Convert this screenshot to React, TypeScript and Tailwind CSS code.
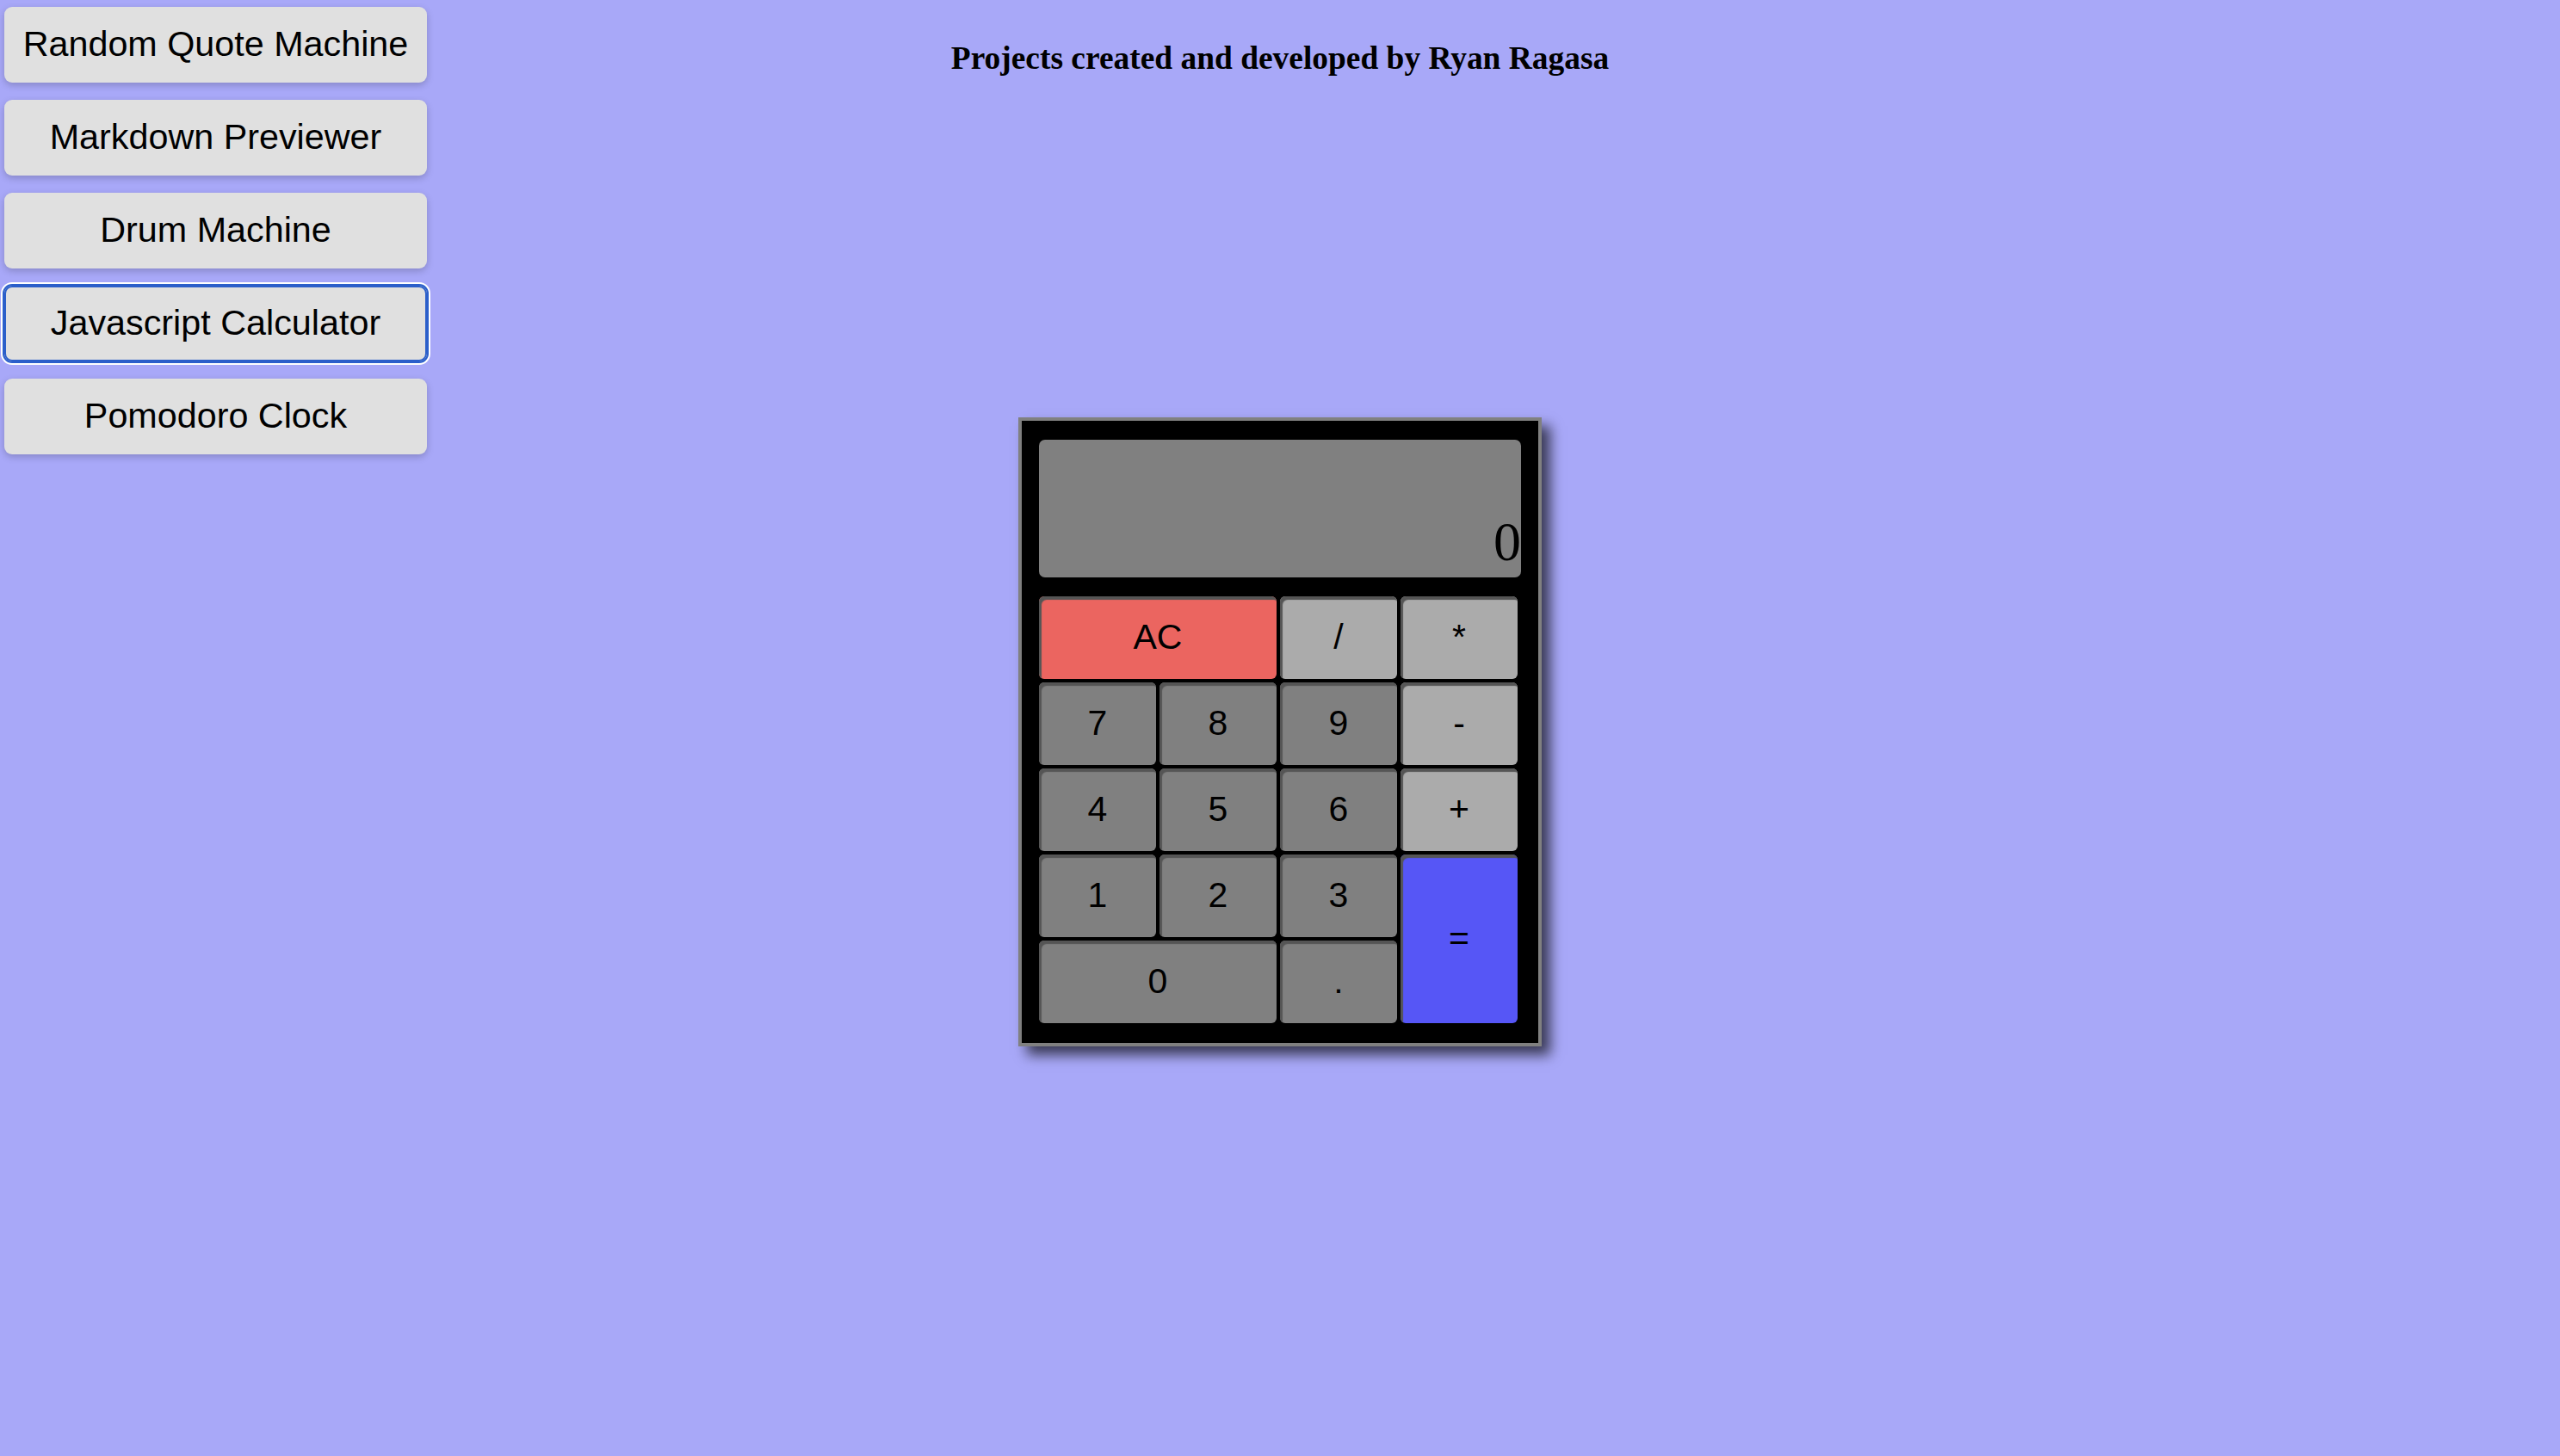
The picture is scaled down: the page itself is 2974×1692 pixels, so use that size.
import { FC } from 'react';

const projects = [
  'Random Quote Machine',
  'Markdown Previewer',
  'Drum Machine',
  'Javascript Calculator',
  'Pomodoro Clock',
];

// keypad layout, grid positions written out so tailwind picks them up
const keys = [
  { label: 'AC', cls: 'col-span-2 bg-[#eb6560]' },
  { label: '/', cls: 'bg-[#ababab]' },
  { label: '*', cls: 'bg-[#ababab]' },
  { label: '7', cls: 'bg-[#808080]' },
  { label: '8', cls: 'bg-[#808080]' },
  { label: '9', cls: 'bg-[#808080]' },
  { label: '-', cls: 'bg-[#ababab]' },
  { label: '4', cls: 'bg-[#808080]' },
  { label: '5', cls: 'bg-[#808080]' },
  { label: '6', cls: 'bg-[#808080]' },
  { label: '+', cls: 'bg-[#ababab]' },
  { label: '1', cls: 'bg-[#808080]' },
  { label: '2', cls: 'bg-[#808080]' },
  { label: '3', cls: 'bg-[#808080]' },
  { label: '=', cls: 'row-span-2 bg-[#5656f6]' },
  { label: '0', cls: 'col-span-2 bg-[#808080]' },
  { label: '.', cls: 'bg-[#808080]' },
];

const Calculator: FC = () => (
  <div className="w-[608px] border-4 border-[#808080] bg-black pt-[22px] pb-[23px] px-[20px] shadow-[10px_10px_14px_rgba(0,0,0,0.65)]">
    {/* display */}
    <div className="h-[160px] rounded-[7px] bg-[#808080] flex items-end justify-end pb-[9px]">
      <span className="text-[64px] leading-[64px] text-black font-['Liberation_Serif',serif]">0</span>
    </div>

    {/* keypad */}
    <div className="mt-[22px] w-[556px] grid grid-cols-4 auto-rows-[96px] gap-[4px]">
      {keys.map((k) => (
        <button
          key={k.label}
          className={`${k.cls} rounded-[6px] shadow-[inset_3px_4px_1px_#555] flex items-center justify-center text-[41px] text-black font-['Liberation_Sans',Arial,sans-serif]`}
        >
          {k.label}
        </button>
      ))}
    </div>
  </div>
);

export default function App() {
  return (
    <div className="min-h-screen bg-[#a8a8f8] grid grid-cols-[1fr_auto_1fr] grid-rows-[auto_1fr]">
      {/* project nav */}
      <div className="row-span-2 flex flex-col gap-[20.5px] pt-[8px] pl-[5px]">
        {projects.map((p) => (
          <button
            key={p}
            className={
              p === 'Javascript Calculator'
                ? "w-[491px] h-[87.5px] rounded-[9px] bg-[#e0e0e0] text-[41.3px] text-black font-['Liberation_Sans',Arial,sans-serif] shadow-[inset_0_0_0_2px_#2b5fca,0_0_0_2px_#2b5fca,0_0_0_4px_white]"
                : "w-[491px] h-[87.5px] rounded-[9px] bg-[#e0e0e0] text-[41.3px] text-black font-['Liberation_Sans',Arial,sans-serif] shadow-[0_3px_8px_rgba(0,0,0,0.2)]"
            }
          >
            {p}
          </button>
        ))}
      </div>

      <h3 className="col-start-2 mt-[46px] text-center text-[37.44px] leading-[43px] font-bold text-black font-['Liberation_Serif',serif]">
        Projects created and developed by Ryan Ragasa
      </h3>

      <div className="col-start-2 flex justify-center items-start pt-[396px]">
        <Calculator />
      </div>
    </div>
  );
}
